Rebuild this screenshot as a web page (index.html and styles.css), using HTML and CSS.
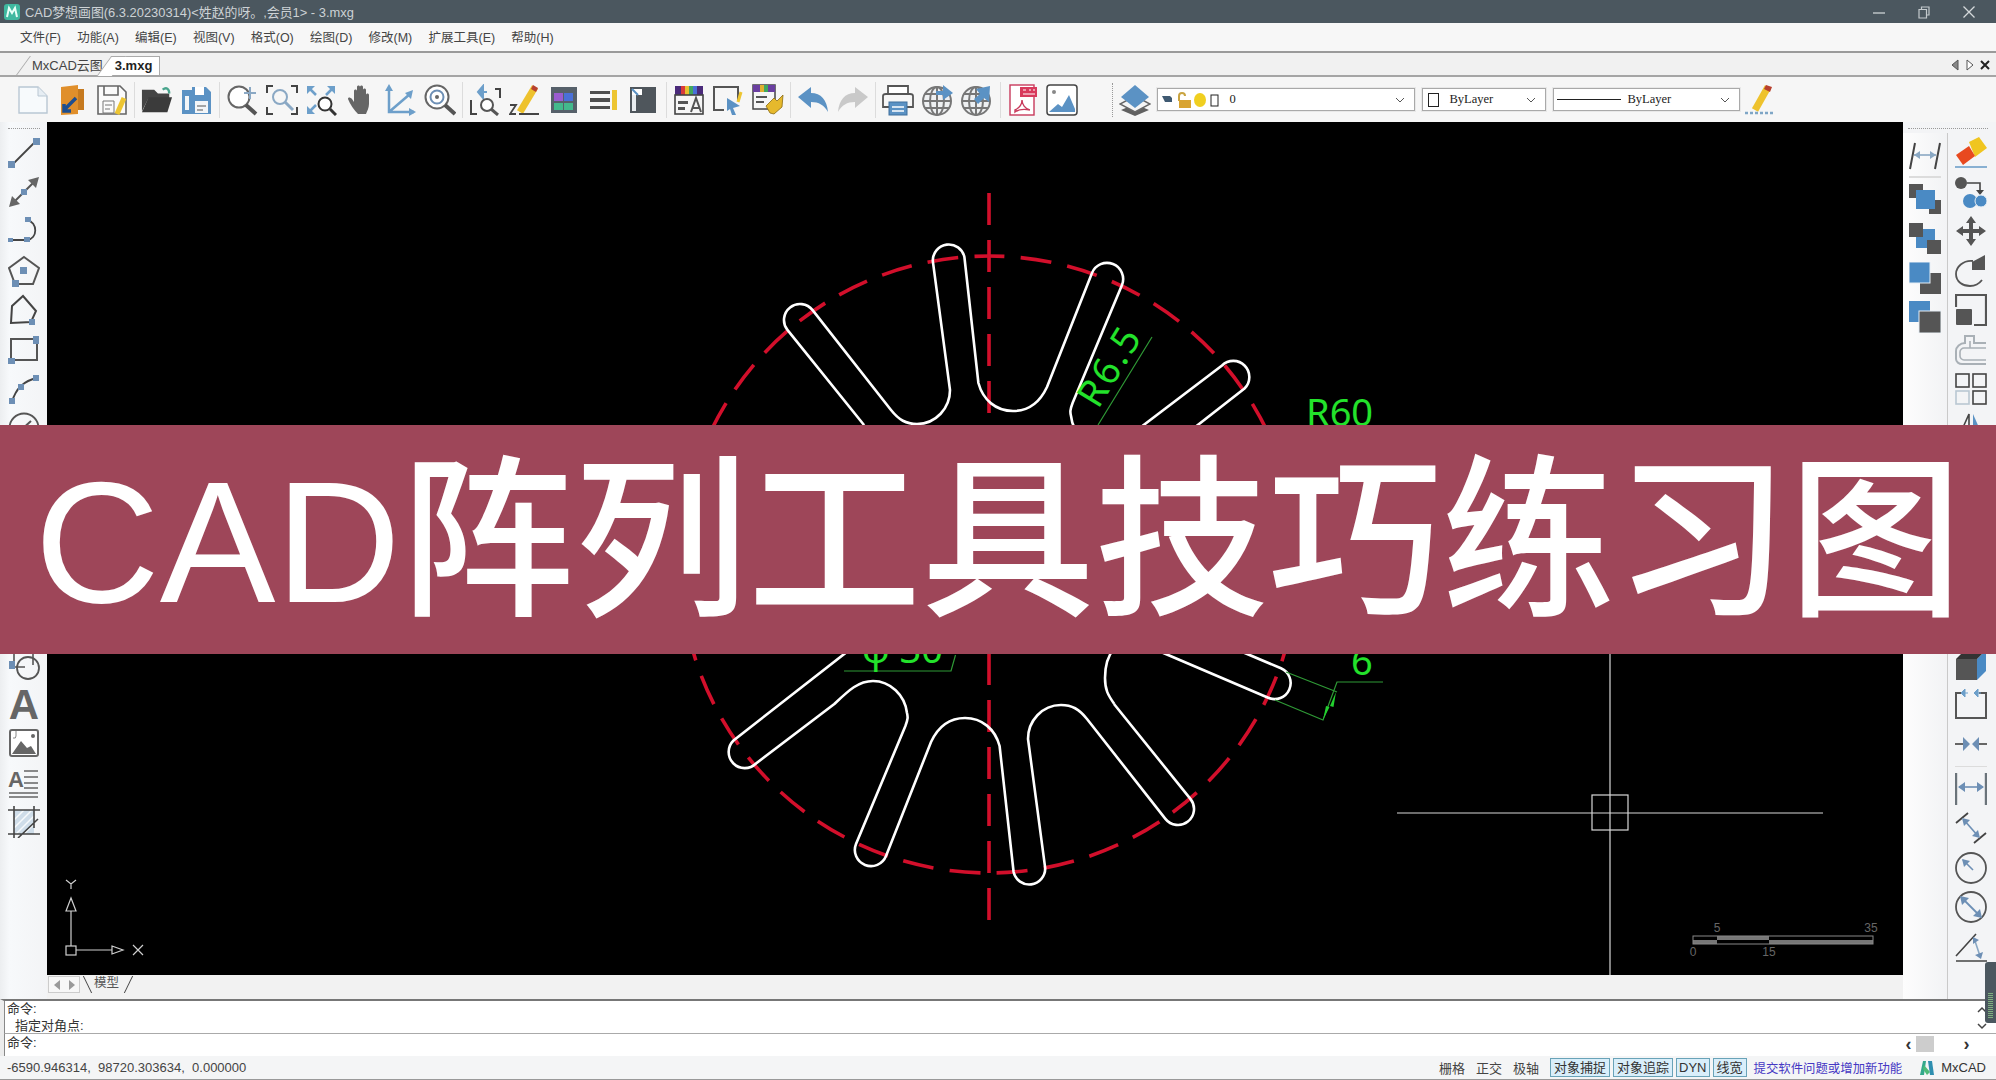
FILE: index.html
```html
<!DOCTYPE html>
<html lang="zh-CN">
<head>
<meta charset="utf-8">
<title>CAD阵列工具技巧练习图</title>
<link rel="stylesheet" href="styles.css">
</head>
<body>
<div class="app">
  <header class="titlebar">
    <svg class="appicon" viewBox="0 0 18 18"><rect x="1" y="1" width="16" height="16" rx="3" fill="#3fb8a0"/><path d="M4 14 L6 5 L9 10 L12 5 L14 14" fill="none" stroke="#e8fff8" stroke-width="2"/></svg>
    <span class="title">CAD梦想画图(6.3.20230314)&lt;姓赵的呀。,会员1&gt; - 3.mxg</span>
    <div class="winbtns">
      <svg class="winbtn" viewBox="0 0 14 14"><path d="M1 8H13" stroke="#c4cacd" stroke-width="1.4"/></svg>
      <svg class="winbtn" viewBox="0 0 14 14"><path d="M2 4.5H9.5V13H2Z M4.5 4.5V2H12V10H9.5" fill="none" stroke="#c4cacd" stroke-width="1.2"/></svg>
      <svg class="winbtn" viewBox="0 0 14 14"><path d="M1.5 1.5L12.5 12.5M12.5 1.5L1.5 12.5" stroke="#d5d9db" stroke-width="1.3"/></svg>
    </div>
  </header>

  <nav class="menubar">
    <span class="menuitem">文件(F)</span><span class="menuitem">功能(A)</span><span class="menuitem">编辑(E)</span><span class="menuitem">视图(V)</span><span class="menuitem">格式(O)</span><span class="menuitem">绘图(D)</span><span class="menuitem">修改(M)</span><span class="menuitem">扩展工具(E)</span><span class="menuitem">帮助(H)</span>
  </nav>

  <div class="tabbar">
    <span class="doctab">MxCAD云图</span>
    <span class="doctab active">3.mxg</span>
    <div class="tabctl">
      <svg class="tabarrow" viewBox="0 0 10 12"><path d="M8 1L2 6L8 11Z" fill="#888" stroke="#555"/></svg>
      <svg class="tabarrow" viewBox="0 0 10 12"><path d="M2 1L8 6L2 11Z" fill="#fff" stroke="#555"/></svg>
      <svg class="tabarrow" viewBox="0 0 10 12"><path d="M1 2L9 10M9 2L1 10" stroke="#222" stroke-width="2"/></svg>
    </div>
  </div>

  <div class="toolbar">
    <div class="tool"><svg class="ic" viewBox="0 0 32 32"><path d="M2 3H21L30 12V29H2Z" fill="#f7fafc" stroke="#b9c7d3" stroke-width="1.4"/><path d="M21 3V12H30" fill="#e6edf3" stroke="#b9c7d3"/></svg></div>
    <div class="tool"><svg class="ic" viewBox="0 0 32 32"><path d="M5 3L22 1V30L5 31Z" fill="#e08f2b"/><path d="M22 5H28V26H22Z" fill="#c67a1f"/><path d="M20 14L8 26M8 20V27H15" fill="none" stroke="#1d4e8f" stroke-width="3.5"/></svg></div>
    <div class="tool"><svg class="ic" viewBox="0 0 32 32"><path d="M2 2H24L30 8V30H2Z" fill="#fafafa" stroke="#666" stroke-width="1.6"/><path d="M8 2V11H22V2" fill="none" stroke="#666" stroke-width="1.6"/><path d="M7 17H18V29H7Z M9 21H16M9 25H14" fill="none" stroke="#777"/><path d="M28 14L21 30" stroke="#edc531" stroke-width="5"/></svg></div>
    <div class="sep"></div>
    <div class="tool"><svg class="ic" viewBox="0 0 34 32"><path d="M1 5H14L18 9H30V14H8L1 28Z" fill="#444"/><path d="M1 29L8 13H33L28 29Z" fill="#3b3b3b"/><path d="M23 5C27 2 30 4 30 9" fill="none" stroke="#49a58d" stroke-width="2.5"/></svg></div>
    <div class="tool"><svg class="ic" viewBox="0 0 32 32"><path d="M1 6H11V30H1Z" fill="#5b92c4"/><path d="M11 3H25L30 8V30H11Z" fill="#5b92c4"/><path d="M14 3H23V11H14Z" fill="#fff"/><path d="M14 17H27V29H14Z" fill="#f2f5f8"/><path d="M16 22H25M16 26H22" stroke="#555"/><path d="M4 12H8V26H4Z" fill="#f2f5f8"/></svg></div>
    <div class="sep"></div>
    <div class="tool"><svg class="ic" viewBox="0 0 32 32"><circle cx="13" cy="13" r="10.5" fill="#fff" stroke="#666" stroke-width="2"/><path d="M20 21L30 30" stroke="#555" stroke-width="4"/><path d="M18 9H30M24 3V15" stroke="#8aa8c4" stroke-width="2"/></svg></div>
    <div class="tool"><svg class="ic" viewBox="0 0 32 32"><path d="M7 2H1V9M25 2H31V9M1 23V30H7M31 23V30H25" fill="none" stroke="#444" stroke-width="2"/><circle cx="14" cy="13" r="7" fill="none" stroke="#8aa8c4" stroke-width="2"/><path d="M19 18L27 26" stroke="#8aa8c4" stroke-width="3"/></svg></div>
    <div class="tool"><svg class="ic" viewBox="0 0 32 32"><path d="M2 2H10L2 10ZM30 2H22L30 10ZM2 30H10L2 22Z" fill="#6d9fca"/><path d="M3 3L11 11M29 3L21 11M3 29L11 21" stroke="#6d9fca" stroke-width="2.5"/><circle cx="20" cy="20" r="6.5" fill="#fff" stroke="#333" stroke-width="2"/><path d="M25 25L31 31" stroke="#333" stroke-width="3"/></svg></div>
    <div class="tool"><svg class="ic" viewBox="0 0 32 32"><path d="M13 30C9 26 5 20 3 15C3 13 5 13 7 15L9 18V7C9 5 12 5 12 7V3C12 1 15 1 15 3V3C15 1 18 1 18 3V6C18 4 21 4 21 6V11C21 9 24 9 24 11V20C24 24 22 27 21 30Z" fill="#666"/></svg></div>
    <div class="tool"><svg class="ic" viewBox="0 0 32 32"><path d="M5 4V28H30M5 28L26 10" fill="none" stroke="#6d9fca" stroke-width="2.5"/><path d="M5 0L1 7H9ZM32 28L25 24V32ZM29 6L21 9L27 15Z" fill="#6d9fca"/></svg></div>
    <div class="tool"><svg class="ic" viewBox="0 0 32 32"><circle cx="13" cy="13" r="11.5" fill="#fff" stroke="#666" stroke-width="2"/><circle cx="13" cy="13" r="6.5" fill="none" stroke="#6d8fb5" stroke-width="2"/><circle cx="13" cy="13" r="2" fill="#666"/><path d="M21 21L31 30" stroke="#555" stroke-width="4"/></svg></div>
    <div class="sep"></div>
    <div class="tool"><svg class="ic" viewBox="0 0 32 32"><path d="M2 16V30H8M26 5H31V14" fill="none" stroke="#444" stroke-width="2"/><path d="M18 8H9M9 8L14 2V14Z" fill="#6d9fca" stroke="#6d9fca" stroke-width="2"/><circle cx="18" cy="21" r="6" fill="#fff" stroke="#555" stroke-width="2"/><path d="M22 25L29 31" stroke="#555" stroke-width="3"/></svg></div>
    <div class="tool"><svg class="ic" viewBox="0 0 32 32"><path d="M26 3L11 28" stroke="#eec22d" stroke-width="7"/><path d="M24 1L29 4L27 8L22 5Z" fill="#b8402f"/><path d="M1 21H7L1 30H7M10 30H30" fill="none" stroke="#444" stroke-width="1.8"/></svg></div>
    <div class="tool"><svg class="ic" viewBox="0 0 32 32"><rect x="3" y="3" width="26" height="26" fill="#56606a"/><rect x="6" y="9" width="9" height="8" fill="#9a5cd0"/><rect x="16" y="9" width="9" height="8" fill="#4a70d8"/><rect x="6" y="19" width="9" height="7" fill="#43b98c"/><rect x="16" y="19" width="9" height="7" fill="#43b98c"/></svg></div>
    <div class="tool"><svg class="ic" viewBox="0 0 32 32"><path d="M2 7H22V10H2ZM2 14H22V18H2ZM2 22H22V25H2Z" fill="#4f4f4f"/><path d="M24 6H29V26H24Z" fill="#edc531"/></svg></div>
    <div class="tool"><svg class="ic" viewBox="0 0 32 32"><rect x="3" y="3" width="26" height="26" fill="#4f565c"/><path d="M5 5H15V11H5Z" fill="#fff"/><path d="M5 5L11 11" stroke="#5b92c4" stroke-width="2"/><path d="M5 11H9V27H5Z" fill="#e9edf0"/></svg></div>
    <div class="sep"></div>
    <div class="tool"><svg class="ic" viewBox="0 0 32 32"><rect x="2" y="2" width="28" height="9" fill="#4a2a7a"/><path d="M8 2h4v9H8z" fill="#d83a3a"/><path d="M12 2h4v9h-4z" fill="#e8c030"/><path d="M16 2h4v9h-4z" fill="#41a85f"/><path d="M20 2h4v9h-4z" fill="#4a70d8"/><rect x="2" y="11" width="28" height="19" fill="#f6f6f6" stroke="#444" stroke-width="1.6"/><path d="M5 17H15V20H5ZM5 23H12V26H5Z" fill="#555"/><path d="M18 28L23 14L28 28M20 24H26" fill="none" stroke="#555" stroke-width="2"/></svg></div>
    <div class="tool"><svg class="ic" viewBox="0 0 32 32"><path d="M26 16V3H2V26H12" fill="none" stroke="#555" stroke-width="2"/><path d="M15 14L28 22L21 24L24 31L20 31L18 25L15 27Z" fill="#5b92c4"/><path d="M29 8L26 18" stroke="#edc531" stroke-width="3"/></svg></div>
    <div class="tool"><svg class="ic" viewBox="0 0 32 32"><rect x="1" y="1" width="22" height="24" fill="#f6f6f6" stroke="#444" stroke-width="1.5"/><path d="M1 1H23V8H1Z" fill="#6a3fa0"/><path d="M8 1h4v7H8z" fill="#e0b030"/><path d="M12 1h4v7h-4z" fill="#41a85f"/><path d="M4 13H15M4 18H12" stroke="#555" stroke-width="2"/><path d="M14 22L22 14L25 17L31 11L30 23L22 30L18 29Z" fill="#e6b92c" stroke="#8a6b12" stroke-width=".8"/></svg></div>
    <div class="sep"></div>
    <div class="tool"><svg class="ic" viewBox="0 0 32 32"><path d="M1 13L14 3V9C24 9 30 16 31 28C27 21 22 18 14 18V24Z" fill="#5b92c4"/></svg></div>
    <div class="tool"><svg class="ic" viewBox="0 0 32 32"><path d="M31 13L18 3V9C8 9 2 16 1 28C5 21 10 18 18 18V24Z" fill="#c9c9c9"/></svg></div>
    <div class="sep"></div>
    <div class="tool"><svg class="ic" viewBox="0 0 32 32"><path d="M6 10V2H26V10" fill="#fff" stroke="#555" stroke-width="1.8"/><path d="M1 12Q1 10 4 10H28Q31 10 31 12V23H1Z" fill="#f6f6f6" stroke="#555" stroke-width="1.8"/><rect x="7" y="18" width="18" height="13" fill="#5b92c4" stroke="#3f6f9c"/><path d="M10 23H22M10 27H22" stroke="#fff" stroke-width="1.6"/></svg></div>
    <div class="tool"><svg class="ic" viewBox="0 0 32 32"><circle cx="15" cy="17" r="14" fill="#eef0f2" stroke="#777" stroke-width="2"/><path d="M1 17H29M3 10H27M3 24H27M15 3V31" stroke="#777" stroke-width="2"/><ellipse cx="15" cy="17" rx="7" ry="14" fill="none" stroke="#777" stroke-width="2"/><path d="M14 7H21V1L31 9L21 16V11H14Z" fill="#5b92c4"/></svg></div>
    <div class="tool"><svg class="ic" viewBox="0 0 32 32"><circle cx="15" cy="17" r="14" fill="#eef0f2" stroke="#777" stroke-width="2"/><path d="M1 17H29M3 10H27M3 24H27M15 3V31" stroke="#777" stroke-width="2"/><ellipse cx="15" cy="17" rx="7" ry="14" fill="none" stroke="#777" stroke-width="2"/><path d="M29 2L28 18L23 14L17 20L13 15L19 10L15 5Z" fill="#5b92c4"/></svg></div>
    <div class="sep"></div>
    <div class="tool"><svg class="ic" viewBox="0 0 32 32"><rect x="3" y="1" width="24" height="30" fill="#fff" stroke="#c83a5c" stroke-width="1.4"/><rect x="13" y="3" width="17" height="10" fill="#d83a5c"/><path d="M16 6H19M22 6H24M26 6H28M16 10H28" stroke="#fff" stroke-width="1.2"/><path d="M8 26C12 24 15 20 15 16C15 20 18 25 23 26C18 25 12 25 8 28Z" fill="none" stroke="#c83a5c" stroke-width="1.4"/></svg></div>
    <div class="tool"><svg class="ic" viewBox="0 0 32 32"><rect x="1" y="1" width="30" height="30" rx="3" fill="#fff" stroke="#444" stroke-width="1.5"/><circle cx="8" cy="8" r="2" fill="#888"/><path d="M3 28L12 20L16 23L23 11L29 25V28Z" fill="#5b92c4"/></svg></div>
    <div class="grip"></div>
    <div class="tool"><svg class="ic" viewBox="0 0 32 32"><path d="M16 20L30 26L16 32L2 26Z" fill="#616161"/><path d="M16 12L31 20L16 28L1 20Z" fill="#f5f5f5" stroke="#666" stroke-width="1.5"/><path d="M16 1L30 13L16 24L2 13Z" fill="#5b92c4"/></svg></div>
    <div class="combo layer">
      <svg class="layicons" viewBox="0 0 58 16"><path d="M1 4H9L11 6V10H4Z" fill="#3f5a72"/><path d="M18 9V4Q18 1 21 1Q24 1 24 4" fill="none" stroke="#c9a441" stroke-width="2"/><rect x="18" y="8" width="12" height="8" fill="#d9a431"/><ellipse cx="39" cy="8" rx="6" ry="7" fill="#f0cf20"/><rect x="50" y="3" width="7" height="11" fill="#fff" stroke="#222"/></svg>
      <span class="comboval zero">0</span>
      <svg class="chev" viewBox="0 0 10 6"><path d="M1 1L5 5L9 1" fill="none" stroke="#555"/></svg>
    </div>
    <div class="combo color">
      <span class="swatch"></span><span class="comboval">ByLayer</span>
      <svg class="chev" viewBox="0 0 10 6"><path d="M1 1L5 5L9 1" fill="none" stroke="#555"/></svg>
    </div>
    <div class="combo ltype">
      <span class="ltline"></span><span class="comboval">ByLayer</span>
      <svg class="chev" viewBox="0 0 10 6"><path d="M1 1L5 5L9 1" fill="none" stroke="#555"/></svg>
    </div>
    <svg class="ic pen" viewBox="0 0 32 32"><path d="M24 3L11 26" stroke="#eec22d" stroke-width="7"/><path d="M22 1L28 3L26 8L20 5Z" fill="#b8402f"/><path d="M1 29H31" stroke="#7fa6c6" stroke-width="2.4" stroke-dasharray="3 2"/></svg>
  </div>

  <div class="workspace">
    <aside class="lefttools">
      <div class="dots"></div>
      <div class="cell"><svg class="ic" viewBox="0 0 32 32"><path d="M4 28L28 4" stroke="#444" stroke-width="1.8"/><rect x="0" y="24" width="7" height="7" fill="#6d8fb5"/><rect x="25" y="1" width="7" height="7" fill="#6d8fb5"/></svg></div>
      <div class="cell"><svg class="ic" viewBox="0 0 32 32"><path d="M5 27L27 5" stroke="#555" stroke-width="2"/><path d="M1 31L4 20L12 28ZM31 1L28 12L20 4Z" fill="#666"/><rect x="13" y="13" width="6" height="6" fill="#6d8fb5"/></svg></div>
      <div class="cell"><svg class="ic" viewBox="0 0 32 32"><path d="M3 25H19C30 24 30 7 19 5" fill="none" stroke="#444" stroke-width="1.8"/><rect x="0" y="23" width="5" height="4" fill="#6d8fb5"/><rect x="16" y="22" width="6" height="5" fill="#6d8fb5"/><rect x="17" y="2" width="6" height="5" fill="#6d8fb5"/></svg></div>
      <div class="cell"><svg class="ic" viewBox="0 0 32 32"><path d="M16 2L31 13L25 29H7L1 13Z" fill="none" stroke="#555" stroke-width="2"/><rect x="12" y="12" width="7" height="7" fill="#6d8fb5"/><rect x="4" y="25" width="7" height="7" fill="#6d8fb5"/></svg></div>
      <div class="cell"><svg class="ic" viewBox="0 0 32 32"><path d="M15 2L28 17L23 28L3 29L4 12Z" fill="none" stroke="#444" stroke-width="2"/><rect x="21" y="25" width="6" height="6" fill="#6d8fb5"/></svg></div>
      <div class="cell"><svg class="ic" viewBox="0 0 32 32"><path d="M3 5H29V26H3Z" fill="none" stroke="#555" stroke-width="2"/><rect x="0" y="24" width="7" height="6" fill="#6d8fb5"/><rect x="25" y="2" width="6" height="8" fill="#6d8fb5"/></svg></div>
      <div class="cell"><svg class="ic" viewBox="0 0 32 32"><path d="M4 29C7 18 14 8 29 5" fill="none" stroke="#444" stroke-width="1.8"/><rect x="1" y="25" width="6" height="6" fill="#6d8fb5"/><rect x="10" y="11" width="6" height="6" fill="#6d8fb5"/><rect x="25" y="2" width="6" height="6" fill="#6d8fb5"/></svg></div>
      <div class="cell"><svg class="ic" viewBox="0 0 32 32"><circle cx="16" cy="16" r="14.5" fill="none" stroke="#555" stroke-width="1.8"/><path d="M12 19L23 9" stroke="#555" stroke-width="2"/></svg></div>
      <div class="cell"></div><div class="cell"></div><div class="cell"></div><div class="cell"></div><div class="cell"></div>
      <div class="cell"><svg class="ic" viewBox="0 0 32 32"><path d="M6 3H25V16" fill="none" stroke="#555" stroke-width="1.6"/><path d="M6 3V18H17" fill="none" stroke="#555" stroke-width="1.6"/><circle cx="20" cy="19" r="11" fill="none" stroke="#555" stroke-width="1.8"/><rect x="1" y="12" width="6" height="8" fill="#6d8fb5"/></svg></div>
      <div class="cell"><svg class="ic" viewBox="0 0 32 32"><text x="16" y="31" text-anchor="middle" class="glyphA">A</text></svg></div>
      <div class="cell"><svg class="ic" viewBox="0 0 32 32"><rect x="2" y="2" width="28" height="26" rx="2" fill="#fff" stroke="#666" stroke-width="2"/><circle cx="25" cy="8" r="2" fill="#666"/><path d="M4 26L13 13L19 20L23 18L28 26Z" fill="#666"/><path d="M8 3V8Q8 11 5 10" fill="none" stroke="#888"/></svg></div>
      <div class="cell"><svg class="ic" viewBox="0 0 32 32"><text x="0" y="20" class="glyphB">A</text><path d="M16 4H30M16 10H30M16 16H30M16 21H30M1 26H30M1 30H30" stroke="#666" stroke-width="1.6"/></svg></div>
      <div class="cell"><svg class="ic" viewBox="0 0 32 32"><rect x="6" y="4" width="20" height="24" fill="#cfdde9"/><path d="M6 14L16 4M6 22L24 4M8 28L26 10M16 28L26 18" stroke="#f7fafc" stroke-width="1.5"/><path d="M0 4H32M0 28H32M6 0V32M26 0V22M10 32L30 13" stroke="#444" stroke-width="1.6"/></svg></div>
    </aside>

    <main class="center">
      <div class="canvas">
        <svg class="drawing" viewBox="47 122 1856 853" width="1856" height="853">
          <circle class="red dashed" cx="989" cy="564.5" r="308.5" transform="rotate(-90 989 564.5)"/>
          <path class="red vdash" d="M989 193V425"/>
          <path class="red vdash" d="M989 920V654"/>
          <path id="half" class="outline" d="M864 425L787.4 329.9A16 16 0 0 1 812.6 310.1L891 410C899 420 906 424 917 424C936 424 950 408 950 390L932.8 261A16 16 0 0 1 964.4 257L978.4 383C983 400 996 411 1013 411C1030 411 1040 402 1047 387L1092 273A16 16 0 0 1 1122 285L1072.6 403C1070 410 1070 412 1071 416C1073 434 1088 448 1105 448C1120 448 1130 438 1143.7 425L1222 365.5A16 16 0 0 1 1244.5 388.5L1130 478C1112 500 1125 590 1160 617L1281 668.3A16 16 0 0 1 1268.2 697.7L1140 643C1118 633 1105 655 1105 678C1105 690 1108 695 1114.3 704"/>
          <use href="#half" transform="rotate(180 989 564.5)"/>
          <path class="dimline" d="M1098 425L1152 337M844 671H951L955.5 655M1286 672L1337 692M1275 700L1323 720L1337 682H1383"/>
          <path class="dimarrow" d="M1336 692L1330 706L1333.5 707ZM1323 720L1326 706L1329.5 707Z"/>
          <text class="dimtext" transform="translate(1098 410) rotate(-58.5)" letter-spacing="2.5">R6.5</text>
          <text class="dimtext" x="1306" y="426">R60</text>
          <text class="dimtext" x="862" y="663">φ 30</text>
          <text class="dimtext" x="1351" y="675">6</text>
          <path class="cross" d="M1610 600V975M1397 813H1823"/>
          <rect class="cross" x="1592" y="795" width="36" height="35"/>
          <path class="ucs" d="M71 946V911M76 950H112M66 880L71 884L76 880M71 884V889M133 945L143 955M143 945L133 955"/>
          <rect class="ucs" x="66" y="946" width="10" height="9"/>
          <path class="ucs" d="M71 898L66 911H76ZM112 946L123 950L112 954Z"/>
          <path class="scalefill" d="M1693 940H1717V944H1693ZM1717 936H1769V940H1717ZM1769 940H1873V944H1769Z"/>
          <rect class="scaleline" x="1693" y="936" width="180" height="8"/>
          <text class="scaletext" x="1717" y="932" text-anchor="middle">5</text>
          <text class="scaletext" x="1871" y="932" text-anchor="middle">35</text>
          <text class="scaletext" x="1693" y="956" text-anchor="middle">0</text>
          <text class="scaletext" x="1769" y="956" text-anchor="middle">15</text>
        </svg>
      </div>
      <div class="sheetstrip">
        <div class="sheetnav">
          <svg class="navarrow" viewBox="0 0 8 12"><path d="M7 1L1 6L7 11Z" fill="#999"/></svg>
          <svg class="navarrow" viewBox="0 0 8 12"><path d="M1 1L7 6L1 11Z" fill="#999"/></svg>
        </div>
        <span class="sheettab">模型</span>
      </div>
    </main>

    <aside class="righttools">
      <div class="dots wide"></div>
      <div class="rightcols">
        <div class="rcol one">
          <div class="cell"><svg class="ic" viewBox="0 0 32 32"><path d="M6 2L1 28M31 2L26 28" stroke="#444" stroke-width="2"/><path d="M5 14H27" stroke="#8aa8c4" stroke-width="1.6"/><path d="M5 14L11 10V18ZM27 14L21 10V18Z" fill="#8aa8c4"/></svg></div>
          <div class="rsep"></div>
          <div class="cell"><svg class="ic" viewBox="0 0 32 32"><rect x="0" y="1" width="14" height="14" fill="#555"/><rect x="20" y="17" width="12" height="14" fill="#555"/><rect x="7" y="7" width="19" height="19" fill="#4a8ac4"/></svg></div>
          <div class="cell"><svg class="ic" viewBox="0 0 32 32"><rect x="7" y="7" width="19" height="19" fill="#4a8ac4"/><rect x="0" y="1" width="14" height="14" fill="#555"/><rect x="18" y="18" width="14" height="14" fill="#555"/></svg></div>
          <div class="cell"><svg class="ic" viewBox="0 0 32 32"><rect x="11" y="11" width="21" height="21" fill="#555"/><rect x="0" y="0" width="21" height="21" fill="#4a8ac4" stroke="#e5eef5"/></svg></div>
          <div class="cell"><svg class="ic" viewBox="0 0 32 32"><rect x="0" y="0" width="21" height="21" fill="#4a8ac4"/><rect x="10" y="10" width="22" height="22" fill="#555" stroke="#e5eef5"/></svg></div>
        </div>
        <div class="rcol two">
          <div class="cell"><svg class="ic" viewBox="0 0 32 32"><path d="M14 5L24 0L32 11L20 20Z" fill="#f0c520"/><path d="M1 18L14 9L20 19L8 28Z" fill="#e8491f"/><path d="M0 30H32" stroke="#6d9fca" stroke-width="1.6"/></svg></div>
          <div class="cell"><svg class="ic" viewBox="0 0 32 32"><circle cx="6" cy="7" r="6" fill="#555"/><path d="M12 7H25V15" fill="none" stroke="#444" stroke-width="1.6"/><path d="M21 14H29L25 19Z" fill="#444"/><circle cx="15" cy="25" r="7" fill="#4a8ac4"/><circle cx="26" cy="25" r="6" fill="#4a8ac4" stroke="#e5eef5"/></svg></div>
          <div class="cell"><svg class="ic" viewBox="0 0 32 32"><path d="M16 1L21 8H18V14H24V11L31 16L24 21V18H18V24H21L16 31L11 24H14V18H8V21L1 16L8 11V14H14V8H11Z" fill="#555"/></svg></div>
          <div class="cell"><svg class="ic" viewBox="0 0 32 32"><path d="M18 6C8 5 1 12 1 19C1 27 8 31 15 31C21 31 24 29 27 25" fill="none" stroke="#555" stroke-width="1.8"/><path d="M17 7L30 0V15H17Z" fill="#555"/></svg></div>
          <div class="cell"><svg class="ic" viewBox="0 0 32 32"><path d="M1 13V1H31V31H19" fill="none" stroke="#555" stroke-width="2.2"/><rect x="1" y="15" width="16" height="16" rx="1" fill="#555"/></svg></div>
          <div class="cell"><svg class="ic" viewBox="0 0 32 32"><path d="M31 9H19V2H10V9C5 9 1 13 1 17V25C1 28 4 30 7 30H31" fill="none" stroke="#a9b0b6" stroke-width="2"/><path d="M31 14H15V7M15 14H9C7 14 5 16 5 18V22C5 24 7 26 9 26H31" fill="none" stroke="#a9b0b6" stroke-width="1.6"/></svg></div>
          <div class="cell"><svg class="ic" viewBox="0 0 32 32"><rect x="1" y="1" width="13" height="13" fill="none" stroke="#444" stroke-width="1.6"/><rect x="18" y="1" width="13" height="13" fill="none" stroke="#444" stroke-width="1.6"/><rect x="1" y="18" width="13" height="13" fill="none" stroke="#b9c7d3" stroke-width="1.6"/><rect x="18" y="18" width="13" height="13" fill="none" stroke="#444" stroke-width="1.6"/></svg></div>
          <div class="cell"><svg class="ic" viewBox="0 0 32 32"><path d="M14 2L6 20H14Z" fill="none" stroke="#444" stroke-width="1.6"/><path d="M18 2L26 20H18Z" fill="#5b92c4"/></svg></div>
          <div class="cell"></div><div class="cell"></div><div class="cell"></div><div class="cell"></div><div class="cell"></div>
          <div class="cell"><svg class="ic" viewBox="0 0 32 32"><path d="M1 10H22V31H1Z" fill="#555"/><path d="M22 10L31 1V22L22 31Z" fill="#4a8ac4"/><path d="M1 10L10 1H31L22 10Z" fill="#333"/></svg></div>
          <div class="cell"><svg class="ic" viewBox="0 0 32 32"><path d="M8 5H1V30H31V5H24" fill="none" stroke="#555" stroke-width="2"/><path d="M13 5H6M6 5L10 1V9ZM19 5H26M19 5L23 1V9Z" fill="#6d9fca" stroke="#6d9fca"/></svg></div>
          <div class="cell"><svg class="ic" viewBox="0 0 32 32"><path d="M0 16H14M32 16H18" stroke="#666" stroke-width="2"/><path d="M15 16L8 9V23ZM17 16L24 9V23Z" fill="#6d8fb5"/></svg></div>
          <div class="rsep narrow"></div>
          <div class="cell"><svg class="ic" viewBox="0 0 32 32"><path d="M1 0V32M31 0V32" stroke="#6a737a" stroke-width="2.4"/><path d="M4 14H28" stroke="#6d8fb5" stroke-width="1.6"/><path d="M3 14L10 9V19ZM29 14L22 9V19Z" fill="#6d8fb5"/></svg></div>
          <div class="cell"><svg class="ic" viewBox="0 0 32 32"><path d="M1 11L13 1M19 31L31 21" stroke="#444" stroke-width="1.8"/><path d="M9 8L23 24" stroke="#6d8fb5" stroke-width="1.6"/><path d="M7 6L15 8L9 14ZM25 26L17 24L23 18Z" fill="#6d8fb5"/></svg></div>
          <div class="cell"><svg class="ic" viewBox="0 0 32 32"><circle cx="16" cy="16" r="15" fill="none" stroke="#555" stroke-width="1.8"/><path d="M8 8L18 18" stroke="#6d8fb5" stroke-width="1.6"/><path d="M7 7L15 9L9 15Z" fill="#6d8fb5"/></svg></div>
          <div class="cell"><svg class="ic" viewBox="0 0 32 32"><circle cx="16" cy="16" r="15" fill="none" stroke="#555" stroke-width="1.8"/><path d="M8 8L24 24" stroke="#6d8fb5" stroke-width="1.8"/><path d="M5 5L14 7L7 14ZM27 27L18 25L25 18Z" fill="#6d8fb5"/></svg></div>
          <div class="cell"><svg class="ic" viewBox="0 0 32 32"><path d="M1 25L21 3M1 30H32" stroke="#444" stroke-width="1.6"/><path d="M19 7L25 25" stroke="#8aa8c4" stroke-width="1.6"/><path d="M18 6L24 9L18 13ZM26 28L20 24L28 21Z" fill="#6d8fb5"/></svg></div>
        </div>
      </div>
    </aside>
  </div>

  <section class="command">
    <div class="cmdhist">
      <div class="cmdline">命令:</div>
      <div class="cmdline indent">指定对角点:</div>
      <svg class="scrollup" viewBox="0 0 12 8"><path d="M2 6L6 2L10 6" fill="none" stroke="#444" stroke-width="1.5"/></svg>
      <svg class="scrolldown" viewBox="0 0 12 8"><path d="M2 2L6 6L10 2" fill="none" stroke="#444" stroke-width="1.5"/></svg>
    </div>
    <div class="cmdinput">
      <span class="cmdline">命令:</span>
      <div class="hscroll">
        <span class="harrow">‹</span><span class="hthumb"></span><span class="harrow last">›</span>
      </div>
    </div>
  </section>

  <footer class="statusbar">
    <span class="coords">-6590.946314,&nbsp;&nbsp;98720.303634,&nbsp;&nbsp;0.000000</span>
    <div class="toggles">
      <span class="toggle">栅格</span><span class="toggle">正交</span><span class="toggle">极轴</span>
      <span class="toggle on">对象捕捉</span><span class="toggle on">对象追踪</span><span class="toggle on dyn">DYN</span><span class="toggle on">线宽</span>
    </div>
    <span class="feedback">提交软件问题或增加新功能</span>
    <svg class="mxlogo" viewBox="0 0 16 16"><path d="M1 15L4 1H7L5 15Z" fill="#33a88c"/><path d="M9 1H13L15 15H11Z" fill="#2f8fb0"/><path d="M5 5L11 12L8 15L4 9Z" fill="#4dbb78"/></svg>
    <span class="mxname">MxCAD</span>
  </footer>

  <div class="sidehandle"><span class="handlegrip"></span></div>
  <div class="banner">CAD阵列工具技巧练习图</div>
</div>
</body>
</html>
```
FILE: styles.css
```css
* { box-sizing: border-box; }
html, body { margin: 0; padding: 0; background: #f4f4f4; }
body { font-family: "Liberation Sans", "Noto Sans CJK SC", sans-serif; color: #333; }
.app { position: relative; width: 1996px; height: 1080px; overflow: hidden; display: flex; flex-direction: column; }

.titlebar { height: 23px; background: #4b575f; display: flex; align-items: center; padding-left: 3px; color: #cdd2d5; font-size: 12.9px; flex: none; }
.appicon { width: 18px; height: 18px; margin-right: 4px; }
.title { white-space: nowrap; }
.winbtns { margin-left: auto; display: flex; gap: 31px; padding-right: 20px; }
.winbtn { width: 14px; height: 14px; display: block; }

.menubar { height: 30px; flex: none; background: #f7f7f7; border-bottom: 2px solid #9a9a9a; display: flex; align-items: center; padding-left: 20px; gap: 16.2px; font-size: 12.5px; color: #444; padding-bottom: 2px; }
.menuitem { white-space: nowrap; }

.tabbar { height: 24px; flex: none; background: #f1f1f1; border-bottom: 2px solid #a5a5a5; display: flex; align-items: flex-end; padding-left: 32px; font-size: 13px; position: relative; }
.doctab { height: 19px; line-height: 19px; color: #444; white-space: nowrap; margin-right: 8px; position: relative; isolation: isolate; }
.doctab::before { content: ""; position: absolute; left: -9px; top: 0; height: 100%; width: 1px; background: #a9a9a9; transform: skewX(-36deg); }
.doctab.active { font-weight: bold; color: #222; background: #fff; border-top: 1px solid #aaa; border-right: 1px solid #aaa; padding: 0 7px 0 4px; line-height: 18px; margin-right: 0; }
.doctab.active::before { left: -7px; width: 14px; background: #fff; border-left: 1px solid #a9a9a9; border-top: 1px solid #aaa; top: -1px; height: calc(100% + 1px); z-index: -1; }
.tabctl { margin-left: auto; display: flex; align-items: center; gap: 5px; height: 20px; padding-right: 6px; }
.tabarrow { width: 10px; height: 12px; display: block; }

.toolbar { height: 45px; flex: none; background: #f6f6f6; display: flex; align-items: center; padding-left: 13px; }
.tool { width: 39.5px; height: 32px; flex: none; display: flex; justify-content: center; }
.ic { width: 32px; height: 32px; display: block; flex: none; }
.sep { width: 6px; height: 36px; flex: none; display: flex; justify-content: center; background: linear-gradient(#dcdcdc, #dcdcdc) center / 1px 100% no-repeat; }
.grip { width: 1px; height: 34px; margin: 0 2px 0 30px; flex: none; border-left: 1px dotted #999; }
.combo { height: 23px; background: #fff; border: 1px solid #a9a9a9; box-shadow: 0 0 0 1px #e8e8e8; display: flex; align-items: center; flex: none; font-family: "Liberation Serif", serif; font-size: 12.5px; color: #222; position: relative; }
.combo.layer { width: 258px; margin-left: 2px; }
.combo.color { width: 124px; margin-left: 7px; }
.combo.ltype { width: 187px; margin-left: 7px; }
.layicons { width: 58px; height: 16px; margin-left: 3px; flex: none; }
.comboval { white-space: nowrap; }
.zero { margin-left: 11px; }
.swatch { width: 11px; height: 14px; border: 1px solid #222; background: #fff; margin: 0 11px 0 5px; flex: none; }
.ltline { width: 64px; height: 1px; background: #222; margin: 0 7px 0 3px; flex: none; }
.chev { width: 10px; height: 6px; margin-left: auto; margin-right: 9px; flex: none; }
.pen { margin-left: 4px; }

.workspace { height: 877px; flex: none; display: flex; }
.lefttools { width: 47px; flex: none; padding-top: 6px; background: linear-gradient(90deg, #eceef0, #f7f9fb 20%, #f3f4f6); display: flex; flex-direction: column; align-items: center; }
.dots { width: 32px; height: 1px; border-top: 1px dotted #999; margin-bottom: 4px; flex: none; }
.dots.wide { width: 80px; margin-left: 5px; }
.cell { height: 39.4px; width: 32px; flex: none; display: flex; align-items: center; }
.glyphA { font: bold 42px "Liberation Sans", sans-serif; fill: #666; }
.glyphB { font: bold 22px "Liberation Sans", sans-serif; fill: #666; }

.center { width: 1856px; flex: none; display: flex; flex-direction: column; }
.canvas { height: 853px; background: #000; flex: none; }
.drawing { display: block; }
.outline, .drawing use { fill: none; stroke: #fff; stroke-width: 2.6; }
.red { fill: none; stroke: #d20f2b; stroke-width: 3.6; }
.dashed { stroke-dasharray: 31 16.28; stroke-dashoffset: 15.5; }
.vdash { stroke-dasharray: 32 15; }
.dimline { fill: none; stroke: #2f9a36; stroke-width: 1.2; }
.dimarrow { fill: #22d02e; }
.dimtext { font: 38px "Noto Sans", sans-serif; fill: #23e22b; }
.cross { fill: none; stroke: #d8d8d8; stroke-width: 1.2; }
.ucs { fill: none; stroke: #cfcfcf; stroke-width: 1.2; }
.scalefill { fill: #777; }
.scaleline { fill: none; stroke: #888; stroke-width: 1; }
.scaletext { font: 12px "Liberation Sans", sans-serif; fill: #666; }

.sheetstrip { height: 24px; flex: none; background: #f2f2f2; display: flex; align-items: flex-start; padding: 1px 0 0 1px; }
.sheetnav { width: 32px; height: 17px; border: 1px solid #ccc; display: flex; justify-content: space-around; align-items: center; background: #f7f7f7; }
.navarrow { width: 8px; height: 12px; display: block; }
.sheettab { margin-left: 2px; width: 50px; height: 17px; padding-left: 12px; font-size: 12.5px; line-height: 15px; color: #555; position: relative; }
.sheettab::before, .sheettab::after { content: ""; position: absolute; top: 0; height: 100%; width: 1px; background: #444; }
.sheettab::before { left: 5px; transform: skewX(26deg); }
.sheettab::after { right: 3px; transform: skewX(-26deg); }

.righttools { width: 93px; flex: none; padding-top: 6px; background: #f3f4f6; }
.rightcols { display: flex; height: 866px; margin-top: 0; }
.rcol { display: flex; flex-direction: column; align-items: center; }
.rcol.one { width: 45px; padding-top: 4px; border-right: 1px solid #c9c9c9; background: linear-gradient(90deg, #fdfdfd, #f2f3f5); }
.rcol.two { width: 46px; }
.rsep { width: 32px; height: 2px; background: #dcdcdc; flex: none; margin: 0 0 1px; }
.rsep.narrow { height: 6px; background: linear-gradient(#dcdcdc, #dcdcdc) center / 100% 1px no-repeat; margin: 0; }

.command { height: 57px; flex: none; background: #fff; border-top: 2px solid #777; border-left: 4px solid #ececec; font-size: 13px; color: #333; display: flex; flex-direction: column; }
.cmdhist { height: 33px; flex: none; border-bottom: 1px solid #aaa; position: relative; border-left: 1px solid #888; }
.cmdline { height: 16px; line-height: 16px; padding-left: 2px; white-space: nowrap; }
.cmdline.indent { padding-left: 10px; height: 17px; line-height: 18px; }
.scrollup, .scrolldown { position: absolute; right: 8px; width: 12px; height: 8px; }
.scrollup { top: 5px; }
.scrolldown { top: 21px; }
.cmdinput { flex: 1; display: flex; border-left: 1px solid #888; align-items: flex-start; padding-top: 1px; }
.hscroll { margin-left: auto; width: 90px; height: 18px; margin-right: 2px; display: flex; align-items: center; color: #333; font-size: 18px; font-weight: bold; }
.harrow { width: 9px; text-align: center; line-height: 16px; }
.harrow.last { margin-left: 28px; }
.hthumb { width: 18px; height: 16px; background: #cdcdcd; margin-left: 3px; }

.statusbar { height: 24px; flex: none; background: #f4f5f6; display: flex; align-items: center; font-size: 13px; color: #444; padding-left: 7px; border-bottom: 1px solid #999; }
.coords { white-space: nowrap; }
.toggles { margin-left: auto; display: flex; align-items: center; }
.toggle { white-space: nowrap; margin-right: 11px; }
.toggle.on { height: 19px; line-height: 17px; padding: 0 3px; background: #d9eefa; border: 1px solid #69a3b8; margin-right: 3px; color: #333; }
.toggle.dyn { padding: 0 2px; }
.feedback { color: #4638c4; font-size: 12.4px; margin-left: 4px; white-space: nowrap; }
.mxlogo { width: 16px; height: 16px; margin-left: 17px; flex: none; }
.mxname { margin-left: 6px; margin-right: 10px; color: #333; font-size: 13px; }

.sidehandle { position: absolute; left: 1985px; top: 962px; width: 11px; height: 61px; background: #4b575f; border-radius: 3px 0 0 3px; display: flex; align-items: flex-end; justify-content: center; padding-bottom: 4px; }
.handlegrip { width: 5px; height: 26px; background: repeating-linear-gradient(#7fb07f 0 1px, #4b575f 1px 2px); }

.banner { position: absolute; left: 0; top: 425px; width: 100%; height: 229px; background: #9e4659; color: #fff; font-family: "Liberation Sans", "Noto Sans CJK SC", sans-serif; font-size: 173.5px; font-weight: 500; line-height: 1.15; padding: 7px 0 0 34.5px; white-space: nowrap; display: flex; align-items: center; }
```
